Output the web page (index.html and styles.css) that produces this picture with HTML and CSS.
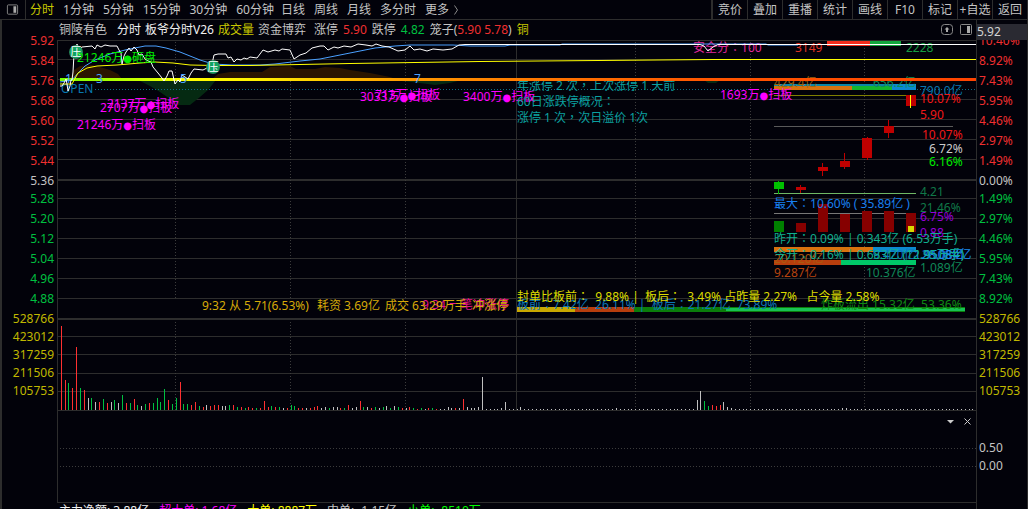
FILE: index.html
```html
<!DOCTYPE html>
<html lang="zh-CN">
<head>
<meta charset="utf-8">
<title>铜陵有色 分时</title>
<link rel="stylesheet" href="styles.css">
</head>
<body>
<header class="toolbar">
  <button class="panel-btn" aria-label="侧栏"><svg width="14" height="12" viewBox="0 0 14 12"><rect x="1.5" y=".5" width="11" height="10" rx="1" class="ico"/><rect x="8" y="2" width="3" height="7" class="ico-fill"/></svg></button>
  <nav class="periods minutes">
    <button class="active">分时</button><button>1分钟</button><button>5分钟</button><button>15分钟</button><button>30分钟</button><button>60分钟</button>
  </nav>
  <nav class="periods days">
    <button>日线</button><button>周线</button><button>月线</button><button>多分时</button><button class="more">更多<svg width="5" height="12" viewBox="0 0 5 12"><path d="M.5 1.500 3.500 6 .5 10.500" class="ico"/></svg></button>
  </nav>
  <nav class="tools">
    <button>竞价</button><button>叠加</button><button>重播</button><button>统计</button><button>画线</button><button>F10</button><button>标记</button><button>+自选</button><button>返回</button>
  </nav>
</header>
<main class="board">
  <div class="axis axis-left">
    <ul class="above">
      <li class="up">5.92</li><li class="up">5.84</li><li class="up">5.76</li><li class="up">5.68</li><li class="up">5.60</li><li class="up">5.52</li><li class="up">5.44</li><li>5.36</li>
    </ul>
    <ul class="below">
      <li>5.28</li><li>5.20</li><li>5.12</li><li>5.04</li><li>4.96</li><li>4.88</li>
    </ul>
    <ul class="volume"><li>528766</li><li>423012</li><li>317259</li><li>211506</li><li>105753</li></ul>
  </div>
  <section class="plot">
    <div class="info">
      <span>铜陵有色</span>
      <span class="mode white">分时</span>
      <span class="white">板爷分时V26</span>
      <span class="gold">成交量</span>
      <span>资金博弈</span>
      <span class="limit">涨停</span><span class="num up">5.90</span>
      <span>跌停</span><span class="num down">4.82</span>
      <span>笼子(<span class="up">5.90 5.78</span>)</span>
      <span class="num gold">铜</span>
      <span class="info-icons">
        <button aria-label="上移"><svg width="12" height="12" viewBox="0 0 12 12"><rect x=".5" y=".5" width="11" height="10" rx="3" class="ico"/><path d="M6 3 8.500 5.500H7V8H5V5.500H3.500Z" class="ico-fill"/></svg></button>
        <button aria-label="侧栏"><svg width="12" height="12" viewBox="0 0 12 12"><rect x=".5" y=".5" width="11" height="10" rx="1" class="ico"/><rect x="7" y="2" width="3" height="7" class="ico-fill"/></svg></button>
      </span>
    </div>
    <div class="canvas">
    <svg class="chart" viewBox="57 40 919 463">
      <defs>
        <linearGradient id="heat" gradientUnits="userSpaceOnUse" x1="60" y1="0" x2="976" y2="0">
          <stop offset="0" stop-color="#7f0"/><stop offset=".11" stop-color="#df0"/><stop offset=".14" stop-color="#ff0"/><stop offset=".22" stop-color="#fe0"/><stop offset=".38" stop-color="#f90"/><stop offset=".52" stop-color="#f70"/><stop offset=".71" stop-color="#f50"/><stop offset="1" stop-color="#f40"/>
        </linearGradient>
        <radialGradient id="badge"><stop offset="0" stop-color="#0b9a58"/><stop offset=".75" stop-color="#12a866"/><stop offset="1" stop-color="#2b7a54"/></radialGradient>
      </defs>
      <g class="grid">
        <path d="M57 40.500H976M57 59.500H976M57 79.500H976M57 99.500H976M57 119.500H976M57 139.500H976M57 159.500H976M57 198.500H976M57 218.500H976M57 238.500H976M57 258.500H976M57 278.500H976M57 298.500H976M57 336.500H976M57 354.500H976M57 373.500H976M57 391.500H976M57 410.500H976M57 502.500H976M57.500 40V503M516.500 40V410"/>
        <path d="M57 180H976M57 319H976" stroke-width="2"/>
        <path class="dots" d="M175.500 42V298M290.500 42V298M405.500 42V298M635.500 42V298M750.500 42V298M864.500 42V298M175.500 322V410M290.500 322V410M405.500 322V410M635.500 322V410M750.500 322V410M864.500 322V410M60 448.500H976M60 466.500H976"/>
      </g>
      <path class="brown" d="M70 79 74 70 80 66 92 65 100 67 110 70 118 74 122 79ZM212 79 218 74 230 72 262 72 270 67 290 66 296 69 315 69 325 67 340 68 350 70 370 73 390 77 396 79Z"/>
      <path class="green-area" d="M138 80 150 86 160 92 170 99 178 105 190 105 200 97 208 90 216 80ZM392 80 420 83 435 85 450 83 462 80ZM704 80H720L716 83H708Z"/>
      <path d="M95 89.500H976" class="open-line"/>

      <g class="candles">
        <path fill="#f32c1c" d="M827 41h43v5h-43z"/><path fill="#11a63c" d="M870 41h31v5h-31z"/>
        <path fill="#0a86a6" d="M774 84h118v2h-118z"/><path fill="#d8720e" d="M774 86h78v4h-78z"/><path fill="#12b52e" d="M852 86h40v4h-40z"/><path fill="#0b89d0" d="M892 84h24v6h-24z"/>
        <path fill="#808000" d="M774 95h132v1h-132z"/><path fill="#5a5a5a" d="M774 126h179v1h-179z"/><path fill="#6fb865" d="M774 193h142v1h-142z"/><path fill="#777" d="M774 213h142v1h-142z"/>
        <path fill="#c00000" d="M906 95h10v11h-10zM884 126h10v7h-10zM888 120h1v18h-1zM862 138h10v20h-10zM867 137h1v23h-1zM840 161h10v6h-10zM844 153h1v16h-1zM818 167h10v4h-10zM822 163h1v13h-1zM796 187h10v3h-10zM800 185h1v8h-1z"/>
        <path fill="#00c000" d="M774 182h10v7h-10zM778 181h1v13h-1z"/><path fill="#ff0" d="M910 95h1v13h-1z"/>
        <path fill="#008000" d="M774 221h10v11h-10z"/><path fill="#860000" d="M796 223h10v9h-10zM818 204h10v28h-10zM840 214h10v18h-10zM862 211h10v21h-10zM884 211h10v21h-10zM906 213h10v19h-10z"/><path fill="#d8d800" d="M908 226h6v6h-6z"/>
        <path fill="#d8720e" d="M774 247h99v5h-99z"/><path fill="#0b89d0" d="M873 247h43v5h-43z"/>
        <path fill="#b73e0d" d="M774 260h67v5h-67z"/><path fill="#00c868" d="M841 260h75v5h-75z"/>
        <path fill="#c8a800" d="M517 307h58v5h-58z"/><path fill="#b73e0d" d="M575 307h59v5h-59z"/><path fill="#0b7d0b" d="M634 307h331v5h-331z"/><path fill="#19c253" d="M726 308h239v3h-239z"/>
      </g>

      <g class="ink-magenta">
        <text x="107" y="108">2137万<tspan class="dot">●</tspan>扫板</text><text x="100" y="112">2707万<tspan class="dot">●</tspan>扫板</text><text x="77" y="129">21246万<tspan class="dot">●</tspan>扫板</text>
        <text x="360" y="101">3033万<tspan class="dot">●</tspan>扫板</text><text x="375" y="99">713万<tspan class="dot">●</tspan>扫板</text><text x="463" y="101">3400万<tspan class="dot">●</tspan>扫板</text><text x="720" y="99">1693万<tspan class="dot">●</tspan>扫板</text>
      </g>
      <g class="ink-teal">
        <text x="517" y="90">年涨停 2 次<tspan class="mark">，</tspan>上次涨停 1 天前</text><text x="517" y="106">60日涨跌停概况<tspan class="mark">：</tspan></text><text x="517" y="122">涨停 1 次<tspan class="mark">，</tspan>次日溢价 1次</text>
      </g>
      <text x="61" y="93" class="open">OPEN</text>
      <text x="693" y="52" fill="#e0289c">安全分<tspan class="mark">：</tspan>100</text><text x="795" y="52" fill="#e03222">3149</text><text x="906" y="52" fill="#159c40">2228</text>
      <text x="774" y="87" fill="#9b6410">429.4亿</text><text x="873" y="87" fill="#0f8c58">656.2亿</text><text x="920" y="95" fill="#0878b0">790.0亿</text>
      <g fill="#f01818"><text x="920" y="103">10.07%</text><text x="920" y="119">5.90</text><text x="922" y="139">10.07%</text></g>
      <text x="929" y="153" fill="#ccc">6.72%</text><text x="929" y="166" fill="#0e0">6.16%</text>
      <text x="920" y="196" fill="#107848">4.21</text><text x="920" y="212" fill="#107848">21.46%</text>
      <text x="920" y="221" fill="#9400d8">6.75%</text><text x="920" y="237" fill="#9400d8">0.88</text>
      <text x="774" y="208" fill="#1880f0">最大<tspan class="mark">：</tspan>10.60% ( 35.89亿 )</text>
      <text x="774" y="263" fill="#a85a10">20.120亿</text><text x="873" y="259" fill="#0b78c0">9.420亿</text><text x="914" y="259" fill="#1b8cf0">1.9508亿</text><text x="922" y="259" fill="#1b8cf0">28.084亿</text>
      <g fill="#10b090"><text x="774" y="243">昨开<tspan class="mark">：</tspan>0.09% | 0.343亿 (6.53万手)</text><text x="774" y="259">今开<tspan class="mark">：</tspan>0.16% | 0.683亿 (12.95万手)</text></g>
      <text x="774" y="277" fill="#b8440e">9.287亿</text><text x="866" y="277" fill="#108858">10.376亿</text><text x="920" y="272" fill="#108858">1.089亿</text>
      <text x="422" y="309" fill="#e8128c">9:34 一笔冲涨停</text>
      <text x="202" y="310" fill="#d6aa08">9:32 从 5.71(6.53%)<tspan x="317">耗资 3.69亿</tspan><tspan x="385">成交 63.29万手</tspan><tspan x="472">冲涨停</tspan></text>
      <text x="517" y="309" fill="#0b78b8" xml:space="preserve">板前<tspan class="mark">：</tspan>7.42亿  26.11% |  板后<tspan class="mark">：</tspan>21.27亿  73.89%</text>
      <text x="821" y="309" fill="#0f8a12" xml:space="preserve">炸板流出 15.32亿  53.36%</text>
      <text x="517" y="301" fill="#dcdc00" xml:space="preserve">封单比板前<tspan class="mark">：</tspan>  9.88% |  板后<tspan class="mark">：</tspan>  3.49% 占昨量 2.27%   占今量 2.58%</text>

      <path d="M60 79.500H976" stroke="url(#heat)" stroke-width="3"/>
      <path class="heat" d="M60 78H976V81H60Z"/>
      <path class="hair" stroke="#4aa0ff" d="M60 82 72 80 78 73 85 66 95 60 110 54 125 50 145 46 156 46 166 48 180 52 200 60 213 64 232 65 260 65 275 64 300 61 320 59 345 54 375 48 395 46 410 45 453 45 470 46 505 46 510 45H560L562 44H766L768 45H798"/>
      <path class="hair" stroke="#ff0" d="M60 84H72L78 73 87 68 97 66 117 65 140 63 155 62 173 63 190 65 215 65.500H250L350 63.500 415 62.500 480 61.500 598 60.500 713 59.500H976"/>
      <path class="hair" stroke="#fff" d="M60 86H62L64 83 66 79 67 84 68 91 70 86 71 80 72 80 73 72 74 54 76 48 77 44 79 50 82 47 92 46 95 49 97 45 101 47 105 45 110 46 117 46 119 50 121 53 122 64 124 56 126 52 129 48 131 51 134 47 137 50 139 55 142 54 145 59 148 61 151 62 153 67 158 73 162 78 164 81 167 76 169 71 172 71 175 84 178 80 180 82 182 75 185 77 188 79 191 73 194 69 203 70 207 68 209 68 212 64 214 55 218 54 226 54 228 58 231 57 234 62 237 59 241 60 244 58 247 59 250 57 257 58 263 50 268 52 275 50 279 51 282 49 290 50 294 59 300 55 306 53 312 48 320 46 324 46 328 50 334 47 338 48 344 46 351 47 358 44 366 45 372 46 376 44 382 46 389 47 398 51 405 50 410 46 414 50 420 49 427 51 433 49 443 50 452 49 459 45 465 44.500H700L704 46 708 51 713 47 718 44.500H976"/>
      <g fill="#4aa0ff"><text x="65" y="83">1</text><text x="96" y="83">3</text><text x="180" y="83">5</text><text x="414" y="83">7</text></g>
      <g class="badges"><circle cx="76" cy="52" r="7"/><circle cx="213" cy="67" r="7"/><text x="76" y="56">压</text><text x="213" y="71">压</text></g>
      <text x="77" y="62" fill="#0e0">21246万<tspan class="dot">●</tspan>砸盘</text>
      <g id="volume"></g>
    </svg>
    <div class="panel-actions">
      <button aria-label="展开"><svg width="9" height="9" viewBox="0 0 9 9"><path d="M1 3H8L4.500 6.500Z" fill="#ccc"/></svg></button>
      <button aria-label="关闭"><svg width="9" height="9" viewBox="0 0 9 9"><path d="M1.500 1.500 7.500 7.500M7.500 1.500 1.500 7.500" stroke="#ccc"/></svg></button>
    </div>
    </div>
    <div class="flow">
      <span class="white">主力净额: 3.88亿</span><span class="magenta">超大单: 1.68亿</span><span class="yellow">大单: 8887万</span><span>中单: -1.15亿</span><span class="lime">小单: -8510万</span>
    </div>
  </section>
  <div class="axis axis-right">
    <ul class="above">
      <li class="up">10.40%</li><li class="up">8.92%</li><li class="up">7.43%</li><li class="up">5.95%</li><li class="up">4.46%</li><li class="up">2.97%</li><li class="up">1.49%</li><li>0.00%</li>
    </ul>
    <ul class="below">
      <li>1.49%</li><li>2.97%</li><li>4.46%</li><li>5.95%</li><li>7.43%</li><li>8.92%</li>
    </ul>
    <ul class="volume"><li>528766</li><li>423012</li><li>317259</li><li>211506</li><li>105753</li></ul>
    <ul class="ratio"><li>0.50</li><li>0.00</li></ul>
    <strong class="tag">5.92</strong>
  </div>
</main>
<script src="script.js"></script>
</body>
</html>
```
FILE: styles.css
```css
* { box-sizing: border-box; }
body {
  margin: 0;
  background: #02020a;
  color: #c4c4c4;
  font: 12px/16px "Noto Sans", "Noto Sans CJK SC", sans-serif;
  overflow: hidden;
}
button {
  margin: 0;
  padding: 0;
  border: 0;
  background: none;
  color: inherit;
  font: inherit;
  white-space: nowrap;
}
svg { display: block; }
ul { margin: 0; padding: 0; list-style: none; }
.ico { fill: none; stroke: #888; }
.ico-fill { fill: #aaa; }

.toolbar {
  display: flex;
  align-items: stretch;
  height: 20px;
  border-bottom: 1px solid #2d2d2d;
}
.panel-btn {
  display: flex;
  align-items: center;
  width: 26px;
  padding: 0 6px;
  border-right: 1px solid #2d2d2d;
}
.periods { display: flex; padding-left: 4px; }
.minutes { gap: 9px; }
.days { gap: 9px; padding-left: 7px; }
.active { color: #c8c800; }
.more { display: flex; align-items: center; gap: 5px; }
.tools {
  display: grid;
  grid-auto-flow: column;
  grid-auto-columns: 35px;
  margin-left: auto;
  border-left: 1px solid #2d2d2d;
  border-right: 1px solid #2d2d2d;
}
.tools button { border-left: 1px solid #2d2d2d; }

.board {
  display: grid;
  grid-template-columns: 55px minmax(0, 1fr) 52px;
  border-left: 2px solid #2d2d2d;
}
.axis { padding-top: 11px; }
.above { line-height: 20px; }
.below { margin-top: -2px; line-height: 20px; color: #00c040; }
.volume { padding-top: 1px; line-height: 18px; color: #c0b800; }
.ratio { padding-top: 39px; line-height: 18px; }
.axis-left { padding-right: 3px; text-align: right; }
.axis-right {
  position: relative;
  padding-left: 2px;
  border-left: 1px solid #2d2d2d;
  border-right: 1px solid #2d2d2d;
}
.tag {
  position: absolute;
  top: 4px;
  left: 0;
  right: 0;
  background: #2a2a32;
  color: #d4d4d4;
  font-weight: 400;
}
.up { color: #f03030; }
.down { color: #00c040; }
.white { color: #f0f0f0; }
.gold { color: #c8c800; }
.magenta { color: #f0f; }
.yellow { color: #ff0; }
.lime { color: #0f0; }

.info {
  display: flex;
  align-items: center;
  gap: 4px;
  height: 20px;
  padding: 0 4px 0 2px;
  white-space: nowrap;
}
.mode { margin-left: 6px; }
.limit { margin-left: 4px; }
.num { margin: 0 1px; }
.info-icons { display: flex; gap: 7px; margin-left: auto; }
.canvas { position: relative; }
.chart {
  width: 100%;
  height: auto;
  fill: none;
  font-size: 12px;
}
.grid { stroke: #2d2d2d; }
.dots { stroke: #3c3c3c; stroke-dasharray: 1 2; }
.brown { fill: #2b1500; }
.green-area { fill: #052a12; }
.open-line { stroke: #0b6c84; stroke-dasharray: 1 2; }
.open { fill: #0878b0; }
.heat { fill: url(#heat); }
.hair { stroke-width: 1; }
.ink-magenta { fill: #f0f; }
.ink-teal { fill: #0ba0a0; }
.dot { font-family: "DejaVu Sans", sans-serif; font-size: 10px; }
.mark { font-family: "Noto Sans CJK TC", sans-serif; font-feature-settings: "locl" 0; }
.candles, .grid { shape-rendering: crispEdges; }
.badges circle { fill: url(#badge); }
.badges text { fill: #fff; font-size: 11px; text-anchor: middle; }
.bar-r { fill: #ff3030; }
.bar-g { fill: #00c040; }
.bar-w { fill: #c0c0c0; }
.panel-actions {
  position: absolute;
  right: 4px;
  bottom: 77px;
  display: flex;
  gap: 8px;
}
.flow {
  display: flex;
  gap: 10px;
  height: 6px;
  padding-left: 2px;
  overflow: hidden;
  white-space: nowrap;
}
```
FILE: script.js
```js
// One token per minute: r/g/w is the bar colour, the number is its height.
const opening = "r84 r30 g27 r22 r63 g22 r20 w12 g12 w8 r8 g11 r7 w8 g10 w7 g15 r7 g7 r11 g5 w4 g6 r7 g7 g12 g8 g21 r10 g6 g12 r28 g6 g6 r5 r8 g4 r3 w5 r4 r5 r5 w4 w4 g5 r5 g3 " +
  "r3 g2 r3 r2 g2 r2 r9 r3 g4 r3 g3 w2 r2 g5 g4 r2 r2 w2 r2 r3 r4 w2 w3 g2 w3 w3 r2 g2 r5 w2 w3 r9 g3 w3 r2 g3 w2 g3 w4 g2 w4 g3 r2 w2 r3 g2 r1 g2 w1 r2 g2 r1 w1 w1 w3 w2 r2 w2 r11 w3 w2 w2 w3 w33 w1 w1 w1 w1 w2 w8";
const bars = opening.split(" ");
while (bars.length < 240) bars.push("w1");
Object.assign(bars, {
  120: "w3", 145: "w2", 166: "w10", 167: "w19", 168: "g9", 169: "g4",
  170: "r5", 171: "r4", 172: "r5", 173: "w8", 174: "w3", 175: "w2", 204: "w2", 205: "w2"
});
const layer = document.getElementById("volume");
bars.forEach((bar, i) => {
  const height = Number(bar.slice(1));
  const rect = document.createElementNS("http://www.w3.org/2000/svg", "rect");
  rect.setAttribute("class", "bar-" + bar[0]);
  rect.setAttribute("x", Math.floor(61.300 + i * 3.830));
  rect.setAttribute("y", 410 - height);
  rect.setAttribute("width", 1);
  rect.setAttribute("height", height);
  layer.append(rect);
});
```
